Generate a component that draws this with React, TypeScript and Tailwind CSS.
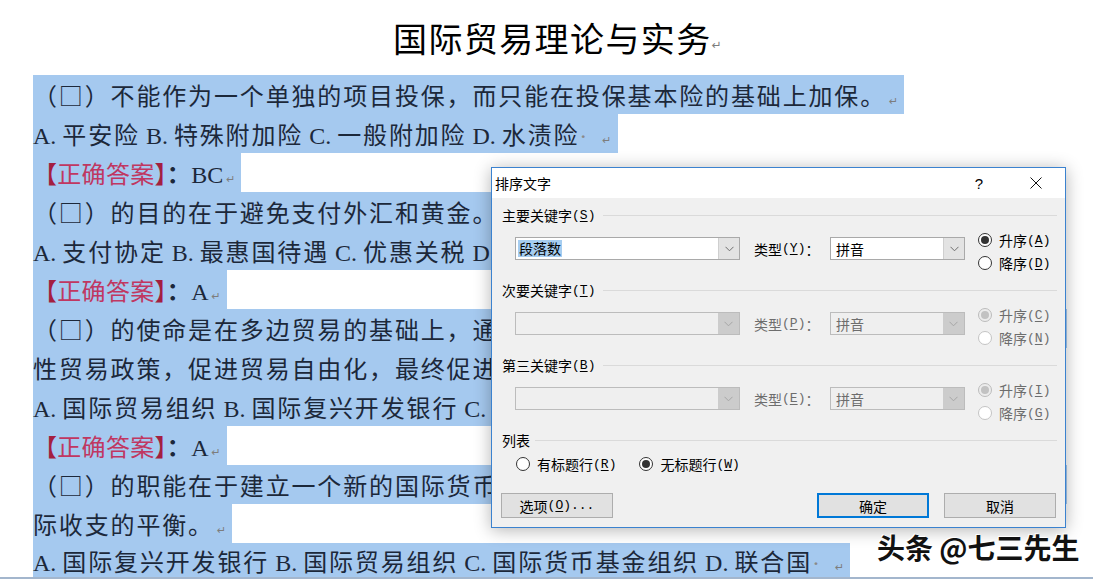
import React from "react";

function Runs({ text }: { text: string }) {
  const parts = text.match(/[\x20-\x7e]+|[^\x20-\x7e]+/g) ?? [];
  return (
    <>
      {parts.map((p, i) =>
        /^[\x20-\x7e]/.test(p) ? (
          <span key={i} className="font-['Liberation_Serif',serif] tracking-normal whitespace-pre">
            {p}
          </span>
        ) : (
          <span key={i} className="font-['Noto_Sans_CJK_SC',sans-serif] tracking-[1.85px]">
            {p}
          </span>
        )
      )}
    </>
  );
}

function Pm() {
  return (
    <span className="font-['DejaVu_Sans',sans-serif] text-[11px] text-[#7d7d7d] ml-[3px] tracking-normal">↵</span>
  );
}

function Dot() {
  return <span className="font-['Liberation_Serif',serif] text-[#8a8a8a] whitespace-pre">{"·  "}</span>;
}

function Line({ children, full, last }: { children: React.ReactNode; full?: boolean; last?: boolean }) {
  if (last)
    return (
      <div className="h-[34px] leading-[34px] w-fit bg-[#a5c9ef] whitespace-nowrap pr-[6px] pt-[1px]">{children}</div>
    );
  return full ? (
    <div className="h-[39px] leading-[39px] w-fit bg-[#a5c9ef] whitespace-nowrap">{children}</div>
  ) : (
    <div className="h-[39px] leading-[39px] w-fit bg-[#a5c9ef] whitespace-nowrap pr-[6px]">{children}</div>
  );
}

function Answer({ v }: { v: string }) {
  return (
    <Line>
      <span className="font-['Noto_Sans_CJK_SC',sans-serif] tracking-[0.3px] text-[#a31f40]">【</span>
      <span className="font-['Noto_Sans_CJK_SC',sans-serif] tracking-[0.3px] text-[#c03761]">正确答案</span>
      <span className="font-['Noto_Sans_CJK_SC',sans-serif] tracking-[0.3px] text-[#a31f40]">】</span>
      <span className="font-['Noto_Sans_CJK_SC',sans-serif] tracking-[0.3px] font-bold">：</span>
      <span className="font-['Liberation_Serif',serif]">{v}</span>
      <Pm />
    </Line>
  );
}

function Mn({ t, k, after }: { t: string; k: string; after?: string }) {
  return (
    <>
      <span>{t}</span>
      <span className="font-['Liberation_Mono',monospace] text-[13px]">(</span>
      <span className="font-['Liberation_Mono',monospace] text-[13px] underline decoration-1 underline-offset-[2px]">{k}</span>
      <span className="font-['Liberation_Mono',monospace] text-[13px]">)</span>
      {after === "：" && <span>：</span>}
      {after && after !== "：" && <span className="font-['Liberation_Mono',monospace] text-[13px]">{after}</span>}
    </>
  );
}

function Chevron({ disabled }: { disabled?: boolean }) {
  return (
    <svg width="9" height="6" viewBox="0 0 9 6">
      <polyline
        points="0.5,0.8 4.5,4.8 8.5,0.8"
        fill="none"
        stroke={disabled ? "#a6a6a6" : "#6e6e6e"}
        strokeWidth="1"
      />
    </svg>
  );
}

function Combo({ wide, disabled, value, selected }: { wide?: boolean; disabled?: boolean; value?: string; selected?: boolean }) {
  const inner = (
    <>
      <div className="flex-1 flex items-center pl-[2px]">
        {value &&
          (selected ? (
            <span className="bg-[#a6cdf0] px-[1px] leading-[17px]">{value}</span>
          ) : disabled ? (
            <span className="pl-[3px] text-[#6d6d6d]">{value}</span>
          ) : (
            <span className="pl-[3px]">{value}</span>
          ))}
      </div>
      {disabled ? (
        <div className="w-[21px] bg-[#cccccc] flex items-center justify-center">
          <Chevron disabled />
        </div>
      ) : (
        <div className="w-[21px] bg-[#e3e3e3] border-l border-[#cfcfcf] flex items-center justify-center">
          <Chevron />
        </div>
      )}
    </>
  );
  if (disabled)
    return wide ? (
      <div className="mt-[12px] h-[23px] w-[225px] border border-[#bcbcbc] bg-[#efefef] flex shrink-0">{inner}</div>
    ) : (
      <div className="mt-[12px] h-[23px] w-[135px] border border-[#bcbcbc] bg-[#efefef] flex shrink-0">{inner}</div>
    );
  return wide ? (
    <div className="mt-[12px] h-[23px] w-[225px] border border-[#a9a9a9] bg-white flex shrink-0">{inner}</div>
  ) : (
    <div className="mt-[12px] h-[23px] w-[135px] border border-[#a9a9a9] bg-white flex shrink-0">{inner}</div>
  );
}

function Radio({ checked, disabled, label, k }: { checked?: boolean; disabled?: boolean; label: string; k: string }) {
  let circle;
  if (disabled) {
    circle = checked ? (
      <span className="w-[14px] h-[14px] rounded-full border border-[#bcbcbc] bg-[#ececec] flex items-center justify-center shrink-0">
        <span className="w-[8px] h-[8px] rounded-full bg-[#c2c2c2]" />
      </span>
    ) : (
      <span className="w-[14px] h-[14px] rounded-full border border-[#c4c4c4] bg-white shrink-0" />
    );
  } else {
    circle = checked ? (
      <span className="w-[14px] h-[14px] rounded-full border border-[#333333] bg-white flex items-center justify-center shrink-0">
        <span className="w-[8px] h-[8px] rounded-full bg-[#333333]" />
      </span>
    ) : (
      <span className="w-[14px] h-[14px] rounded-full border border-[#333333] bg-white shrink-0" />
    );
  }
  return disabled ? (
    <div className="h-[16px] flex items-center">
      {circle}
      <div className="ml-[7px] flex items-center whitespace-nowrap text-[#6d6d6d]">
        <Mn t={label} k={k} />
      </div>
    </div>
  ) : (
    <div className="h-[16px] flex items-center">
      {circle}
      <div className="ml-[7px] flex items-center whitespace-nowrap">
        <Mn t={label} k={k} />
      </div>
    </div>
  );
}

function Section({
  label,
  k,
  disabled,
  typeK,
  upK,
  downK,
  value,
}: {
  label: string;
  k: string;
  disabled?: boolean;
  typeK: string;
  upK: string;
  downK: string;
  value?: string;
}) {
  return (
    <div className="h-[75px] flex flex-col shrink-0">
      <div className="h-[20px] flex items-center pl-[10px] pr-[8px] whitespace-nowrap">
        <Mn t={label} k={k} />
        <div className="flex-1 h-px bg-[#dadada] ml-[8px]" />
      </div>
      <div className="flex items-start pl-[23px]">
        <Combo wide disabled={disabled} value={value} selected={!disabled} />
        {disabled ? (
          <div className="mt-[12px] ml-[14px] w-[76px] h-[23px] flex items-center whitespace-nowrap text-[#6d6d6d]">
            <Mn t="类型" k={typeK} after="：" />
          </div>
        ) : (
          <div className="mt-[12px] ml-[14px] w-[76px] h-[23px] flex items-center whitespace-nowrap">
            <Mn t="类型" k={typeK} after="：" />
          </div>
        )}
        <Combo disabled={disabled} value="拼音" />
        <div className="ml-[13px] mt-[7px] flex flex-col gap-[7px]">
          <Radio checked disabled={disabled} label="升序" k={upK} />
          <Radio disabled={disabled} label="降序" k={downK} />
        </div>
      </div>
    </div>
  );
}

function Dialog() {
  return (
    <div className="absolute left-[491px] top-[167px] w-[575px] h-[361px] border border-[#3b82cf] bg-[#f0f0f0] shadow-[0_2px_16px_rgba(0,0,0,0.3)] flex flex-col font-['Noto_Sans_CJK_SC',sans-serif] text-[14px] text-black leading-none">
      <div className="h-[30px] bg-white flex items-center pl-[3px] pr-[6px] shrink-0">
        <span className="text-[14px]">排序文字</span>
        <span className="flex-1" />
        <span className="w-[20px] text-center text-[15px] font-['Liberation_Sans',sans-serif]">?</span>
        <span className="ml-[24px] w-[46px] h-[30px] flex items-center justify-center">
          <svg width="12" height="12" viewBox="0 0 12 12">
            <line x1="0.5" y1="0.5" x2="11.5" y2="11.5" stroke="#111" strokeWidth="1" />
            <line x1="11.5" y1="0.5" x2="0.5" y2="11.5" stroke="#111" strokeWidth="1" />
          </svg>
        </span>
      </div>
      <div className="flex flex-col pt-[7px]">
        <Section label="主要关键字" k="S" typeK="Y" upK="A" downK="D" value="段落数" />
        <Section label="次要关键字" k="T" disabled typeK="P" upK="C" downK="N" />
        <Section label="第三关键字" k="B" disabled typeK="E" upK="I" downK="G" />
        <div className="h-[63px] flex flex-col shrink-0">
          <div className="h-[20px] flex items-center pl-[10px] pr-[8px]">
            <span>列表</span>
            <div className="flex-1 h-px bg-[#dadada] ml-[5px]" />
          </div>
          <div className="mt-[6px] flex pl-[24px]">
            <Radio label="有标题行" k="R" />
            <div className="ml-[23px]">
              <Radio checked label="无标题行" k="W" />
            </div>
          </div>
        </div>
        <div className="flex px-[9px]">
          <div className="w-[112px] h-[25px] border border-[#adadad] bg-[#e1e1e1] flex items-center justify-center whitespace-nowrap">
            <Mn t="选项" k="O" after="..." />
          </div>
          <div className="flex-1" />
          <div className="w-[112px] h-[25px] border-2 border-[#0078d7] bg-[#e1e1e1] flex items-center justify-center">
            确定
          </div>
          <div className="ml-[15px] w-[112px] h-[25px] border border-[#adadad] bg-[#e1e1e1] flex items-center justify-center">
            取消
          </div>
        </div>
      </div>
    </div>
  );
}

export default function App() {
  return (
    <div className="relative w-[1093px] h-[579px] overflow-hidden bg-white">
      <div className="h-[577px] flex flex-col pl-[33px] text-[24px] text-[#1c283a] font-['Noto_Sans_CJK_SC',sans-serif]">
        <div className="h-[75px] flex items-center pl-[360px] shrink-0">
          <span className="text-[34px] tracking-[1.4px] text-black">国际贸易理论与实务</span>
          <span className="font-['DejaVu_Sans',sans-serif] text-[12px] text-[#7d7d7d] mt-[14px]">↵</span>
        </div>
        <Line>
          <Runs text="（□）不能作为一个单独的项目投保，而只能在投保基本险的基础上加保。" />
          <Pm />
        </Line>
        <Line>
          <Runs text="A. 平安险 B. 特殊附加险 C. 一般附加险 D. 水渍险" />
          <Dot />
          <Pm />
        </Line>
        <Answer v="BC" />
        <Line>
          <Runs text="（□）的目的在于避免支付外汇和黄金。" />
          <Pm />
        </Line>
        <Line>
          <Runs text="A. 支付协定 B. 最惠国待遇 C. 优惠关税 D. 进口许可证" />
          <Dot />
          <Pm />
        </Line>
        <Answer v="A" />
        <Line full>
          <Runs text="（□）的使命是在多边贸易的基础上，通过削减关税和其他贸易壁垒，逐步消除各国的歧视" />
        </Line>
        <Line>
          <Runs text="性贸易政策，促进贸易自由化，最终促进世界经济的发展。" />
          <Pm />
        </Line>
        <Line>
          <Runs text="A. 国际贸易组织 B. 国际复兴开发银行 C. 关税与贸易总协定 D. 世界贸易组织" />
          <Dot />
          <Pm />
        </Line>
        <Answer v="A" />
        <Line full>
          <Runs text="（□）的职能在于建立一个新的国际货币体系，促进国际货币合作，稳定汇率，协助调节国" />
        </Line>
        <Line>
          <Runs text="际收支的平衡。" />
          <Pm />
        </Line>
        <Line last>
          <Runs text="A. 国际复兴开发银行 B. 国际贸易组织 C. 国际货币基金组织 D. 联合国" />
          <Dot />
          <Pm />
        </Line>
      </div>
      <div className="h-[2px] bg-[#a3b6cd]" />
      <Dialog />
      <div className="absolute left-[877px] top-[529px] leading-[36px] text-[28px] font-semibold text-[#111] font-['Noto_Sans_CJK_SC',sans-serif] whitespace-nowrap [text-shadow:-1px_-1px_0_#ffffff]">
        头条 @七三先生
      </div>
    </div>
  );
}
